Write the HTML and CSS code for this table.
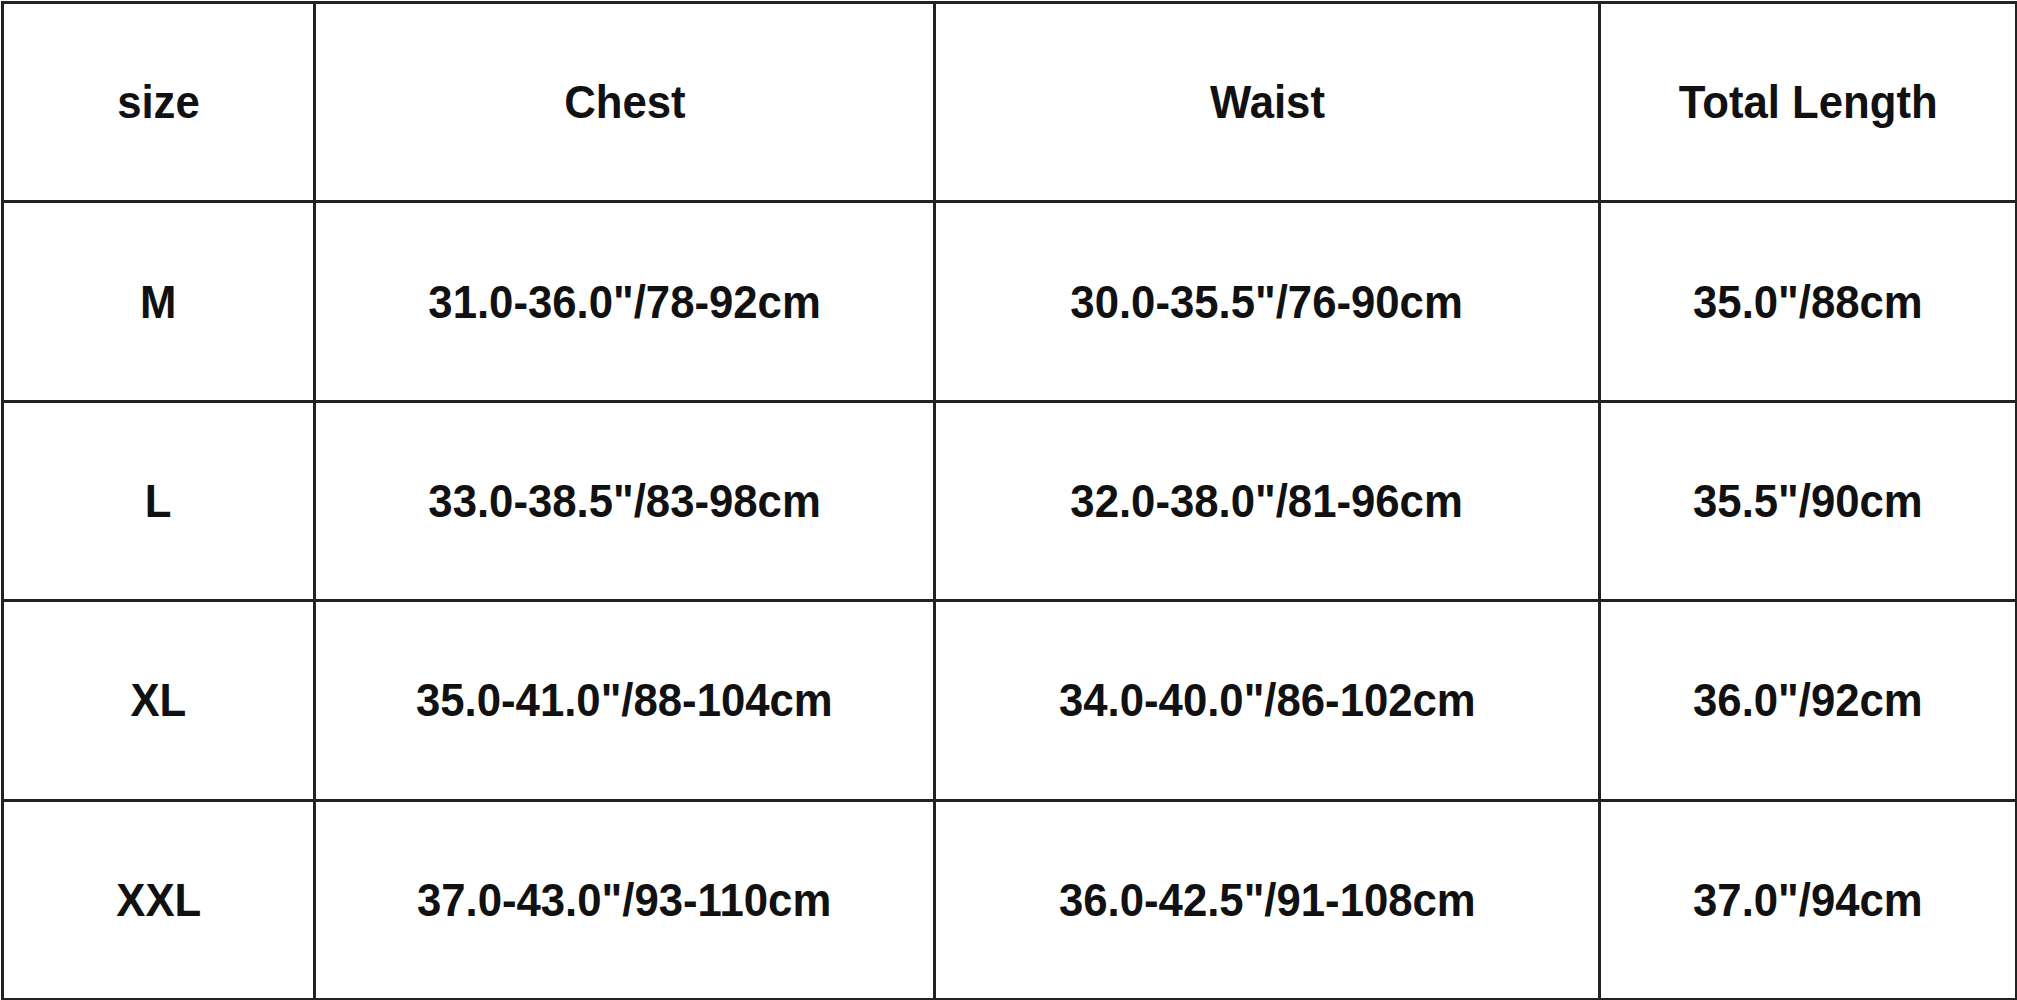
FILE: index.html
```html
<!DOCTYPE html>
<html>
<head>
<meta charset="utf-8">
<link rel="stylesheet" href="styles.css">
</head>
<body>
<table class="size-table">
  <colgroup>
    <col class="c-size">
    <col class="c-chest">
    <col class="c-waist">
    <col class="c-len">
  </colgroup>
  <tr><td><span class="t">size</span></td><td><span class="t">Chest</span></td><td><span class="t">Waist</span></td><td><span class="t">Total Length</span></td></tr>
  <tr><td><span class="t">M</span></td><td><span class="t">31.0-36.0"/78-92cm</span></td><td><span class="t">30.0-35.5"/76-90cm</span></td><td><span class="t">35.0"/88cm</span></td></tr>
  <tr><td><span class="t">L</span></td><td><span class="t">33.0-38.5"/83-98cm</span></td><td><span class="t">32.0-38.0"/81-96cm</span></td><td><span class="t">35.5"/90cm</span></td></tr>
  <tr><td><span class="t">XL</span></td><td><span class="t">35.0-41.0"/88-104cm</span></td><td><span class="t">34.0-40.0"/86-102cm</span></td><td><span class="t">36.0"/92cm</span></td></tr>
  <tr><td><span class="t">XXL</span></td><td><span class="t">37.0-43.0"/93-110cm</span></td><td><span class="t">36.0-42.5"/91-108cm</span></td><td><span class="t">37.0"/94cm</span></td></tr>
</table>
</body>
</html>
```
FILE: styles.css
```css
html, body {
  margin: 0;
  padding: 0;
  background: #ffffff;
}
.size-table {
  margin: 1px;
  width: 2014px;
  height: 997px;
  border-collapse: collapse;
  table-layout: fixed;
  font-family: "Liberation Sans", Arial, sans-serif;
  font-weight: bold;
  font-size: 46px;
  color: #111111;
}
.c-size { width: 312px; }
.c-chest { width: 620px; }
.c-waist { width: 665px; }
.c-len { width: 417px; }
.size-table tr { height: 199.4px; }
.size-table td {
  border: 3px solid #222222;
  text-align: center;
  vertical-align: middle;
  padding: 0;
  white-space: nowrap;
}
.t {
  display: inline-block;
  transform: scaleX(0.95);
}
```
